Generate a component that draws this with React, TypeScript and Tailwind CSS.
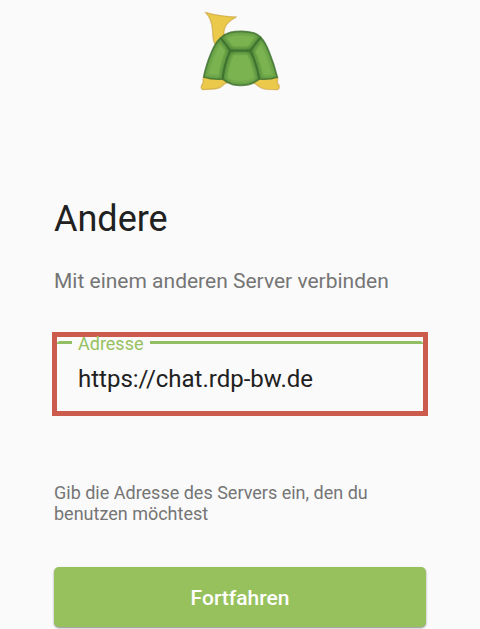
import { useState } from "react";
import type { FormEvent } from "react";

const PLATES = [
  "M92 114 Q76 128 64 158 Q50 190 41 231 Q68 240 98 237 Q103 190 121 152Z",
  "M212 112 Q226 126 238 158 Q252 192 262 232 Q238 240 208 237 Q200 190 181 152Z",
  "M92 114 Q108 98 135 95 Q168 92 192 99 Q206 104 212 112 Q194 132 181 152 L121 152 Q108 130 92 114Z",
  "M121 152 L181 152 Q200 190 208 237 Q191 249 178 253 Q152 259 126 253 Q111 248 98 237 Q103 190 121 152Z",
];

function TurtleLogo() {
  return (
    <svg viewBox="0 0 300 300" className="mx-auto block h-[100px] w-[100px]" aria-hidden="true">
      <g fill="#ebc94b" stroke="#c9a03c" strokeOpacity="0.6" strokeWidth="4" strokeLinejoin="round">
        <path d="M46 37 Q92 50 139 51 Q111 66 104 84 Q100 96 103 108 L75 133 Q68 121 68 94 Q66 56 46 37Z" />
        <path d="M40 232 L119 232 Q119 248 103 252 Q88 267 72 267 L38 269 Q31 265 35 256 L39 249Z" />
        <path d="M263 232 L184 232 Q182 248 197 252 Q214 267 230 268 L263 269 Q270 265 267 256 L262 249Z" />
      </g>
      <g fill="#7bb351">
        {PLATES.map((d) => (
          <path key={d} d={d} />
        ))}
      </g>
      {/* soft shading towards the seams */}
      <g fill="none" stroke="#3f7a30" strokeLinejoin="round" strokeOpacity="0.12" clipPath="url(#shell)">
        {[28, 19, 11].map((width) =>
          PLATES.map((d) => <path key={`${width}${d}`} d={d} strokeWidth={width} />),
        )}
      </g>
      <g fill="none" stroke="#3d6f30" strokeOpacity="0.8" strokeWidth="5" strokeLinejoin="round">
        {PLATES.map((d) => (
          <path key={d} d={d} />
        ))}
      </g>
      <clipPath id="shell">
        {PLATES.map((d) => (
          <path key={d} d={d} />
        ))}
      </clipPath>
    </svg>
  );
}

export default function App() {
  const [address, setAddress] = useState("https://chat.rdp-bw.de");

  const handleSubmit = (e: FormEvent) => {
    e.preventDefault();
  };

  return (
    <div className="min-h-screen bg-[#fafafa] font-['Roboto',sans-serif] text-[#212121]">
      <TurtleLogo />

      <main className="px-[54px] pt-[99px]">
        <h1 className="text-[36px] leading-10">Andere</h1>
        <p className="mt-[30px] text-[21px] leading-6 text-[#757575]">Mit einem anderen Server verbinden</p>

        <form onSubmit={handleSubmit}>
          <div className="-mx-0.5 mt-[39px] border-[5px] border-[#cb5b4c] pt-1">
            <div className="relative rounded-t-[3px] border-t-[3px] border-[#92bf64]">
              <label
                htmlFor="address"
                className="absolute -top-[7px] left-[15px] bg-[#fafafa] px-1.5 text-[18px] leading-[14px] text-[#97c160]"
              >
                Adresse
              </label>
              <input
                id="address"
                type="url"
                value={address}
                onChange={(e) => setAddress(e.target.value)}
                className="block h-[67px] w-full bg-transparent px-[21px] pt-0.5 text-[24px] outline-none"
              />
            </div>
          </div>

          <p className="mt-[66px] text-[18px] leading-[21px] text-[#757575]">
            Gib die Adresse des Servers ein, den du benutzen möchtest
          </p>

          <button
            type="submit"
            className="mt-[43px] h-[60px] w-full rounded-[5px] bg-[#97c15c] pt-1 text-[21px] font-medium text-white shadow-[0_1px_2px_rgba(0,0,0,0.45)]"
          >
            Fortfahren
          </button>
        </form>
      </main>
    </div>
  );
}
